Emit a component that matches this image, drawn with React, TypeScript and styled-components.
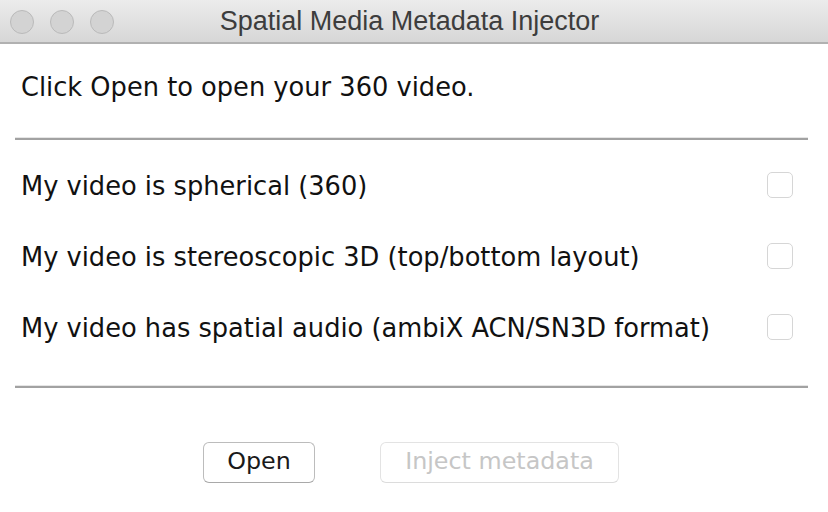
import React from "react";
import styled, { createGlobalStyle } from "styled-components";

const GlobalStyle = createGlobalStyle`
  html, body { margin: 0; padding: 0; background: #ffffff; }
  body { width: 828px; height: 512px; overflow: hidden; font-family: "DejaVu Sans", sans-serif; }
`;

const Window = styled.div`
  width: 828px;
  height: 512px;
  display: flex;
  flex-direction: column;
  background: #ffffff;
`;

const TitleBar = styled.div`
  height: 42px;
  flex: none;
  display: flex;
  align-items: center;
  position: relative;
  background: linear-gradient(#ececec, #d7d7d7);
  border-bottom: 2px solid #b1b1b1;
`;

const Lights = styled.div`
  display: flex;
  gap: 16px;
  padding-left: 10px;
  position: absolute;
  left: 0;
  top: 10px;
`;

const Light = styled.span`
  width: 22px;
  height: 22px;
  border-radius: 50%;
  background: #d3d3d3;
  border: 1px solid #bababa;
`;

const Title = styled.div`
  flex: 1;
  text-align: center;
  padding-right: 9px;
  font-family: "Liberation Sans", Arial, sans-serif;
  font-size: 27px;
  color: #3d3d3d;
  line-height: 42px;
`;

const Content = styled.div`
  display: flex;
  flex-direction: column;
  padding-top: 28px;
`;

const Intro = styled.div`
  padding-left: 21px;
  font-size: 25.7px;
  line-height: 30px;
  color: #111;
`;

const Separator = styled.div<{ $top: number }>`
  margin: ${(p) => p.$top}px 20px 0 15px;
  height: 2px;
  border-top: 1px solid #e6e6e6;
  background: #a2a2a2;
`;

const Rows = styled.div`
  display: flex;
  flex-direction: column;
  padding-top: 10px;
`;

const Row = styled.label`
  height: 71px;
  display: flex;
  align-items: center;
  justify-content: space-between;
  padding: 0 35px 0 21px;
  font-size: 25.7px;
  line-height: 30px;
  color: #111;
`;

const Check = styled.span`
  width: 24px;
  height: 24px;
  margin-top: -2px;
  border: 1.5px solid #d6d6d6;
  border-radius: 5px;
  background: #fff;
`;

const ButtonBar = styled.div`
  display: flex;
  justify-content: center;
  gap: 65px;
  padding: 54px 6px 0 0;
`;

const Button = styled.button<{ $width: number; $disabled?: boolean }>`
  width: ${(p) => p.$width}px;
  height: 41px;
  box-sizing: border-box;
  padding: 0 0 3px;
  background: #ffffff;
  border: 1.5px solid ${(p) => (p.$disabled ? "#e3e3e3" : "#bcbcbc")};
  border-bottom-color: ${(p) => (p.$disabled ? "#dcdcdc" : "#a9a9a9")};
  border-radius: 6px;
  font-family: "DejaVu Sans", sans-serif;
  font-size: 23.8px;
  color: ${(p) => (p.$disabled ? "#c6c6c6" : "#1a1a1a")};
  line-height: 34px;
`;

const options = [
  "My video is spherical (360)",
  "My video is stereoscopic 3D (top/bottom layout)",
  "My video has spatial audio (ambiX ACN/SN3D format)",
];

export default function App() {
  return (
    <Window>
      <GlobalStyle />
      <TitleBar>
        <Lights>
          <Light />
          <Light />
          <Light />
        </Lights>
        <Title>Spatial Media Metadata Injector</Title>
      </TitleBar>
      <Content>
        <Intro>Click Open to open your 360 video.</Intro>
        <Separator $top={35} />
        <Rows>
          {options.map((o) => (
            <Row key={o}>
              <span>{o}</span>
              <Check />
            </Row>
          ))}
        </Rows>
        <Separator $top={22} />
        <ButtonBar>
          <Button $width={112}>Open</Button>
          <Button $width={239} $disabled>
            Inject metadata
          </Button>
        </ButtonBar>
      </Content>
    </Window>
  );
}
